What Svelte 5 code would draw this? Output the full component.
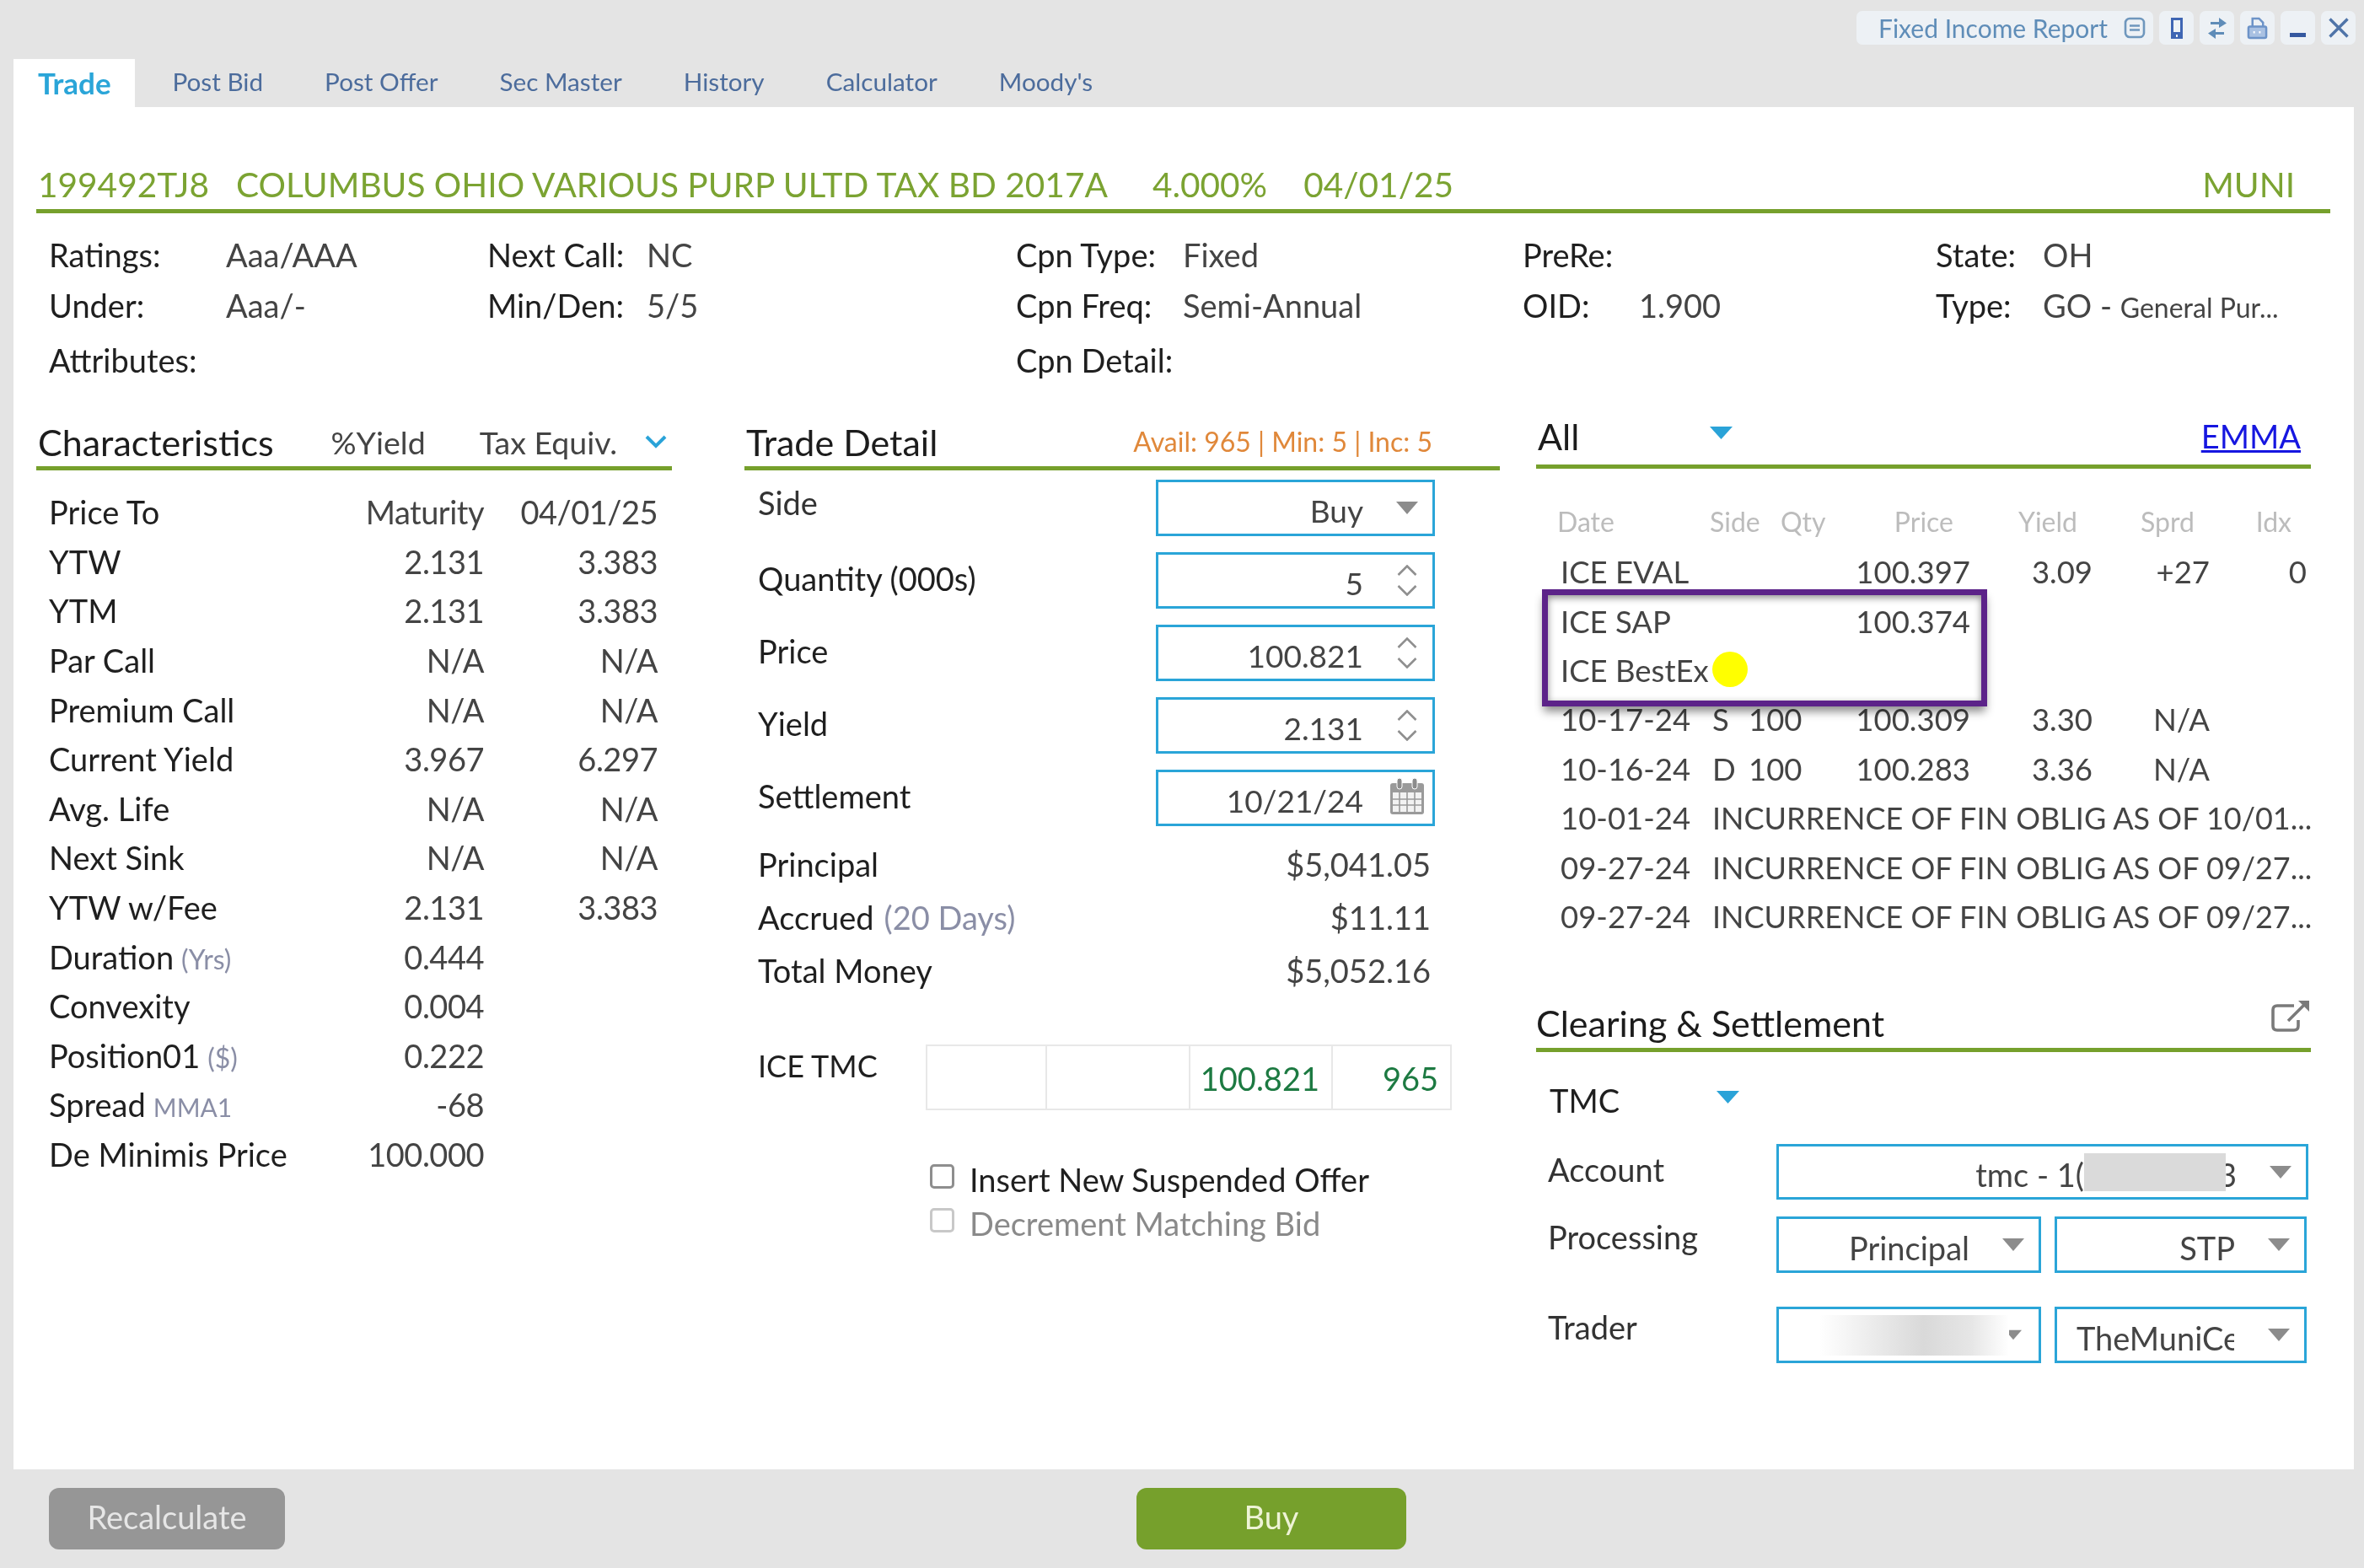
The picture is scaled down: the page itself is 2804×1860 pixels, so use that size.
<script lang="ts">
  const tabs = ['Trade', 'Post Bid', 'Post Offer', 'Sec Master', 'History', 'Calculator', "Moody's"];

  const characteristics = [
    { label: 'Price To', a: 'Maturity', b: '04/01/25' },
    { label: 'YTW', a: '2.131', b: '3.383' },
    { label: 'YTM', a: '2.131', b: '3.383' },
    { label: 'Par Call', a: 'N/A', b: 'N/A' },
    { label: 'Premium Call', a: 'N/A', b: 'N/A' },
    { label: 'Current Yield', a: '3.967', b: '6.297' },
    { label: 'Avg. Life', a: 'N/A', b: 'N/A' },
    { label: 'Next Sink', a: 'N/A', b: 'N/A' },
    { label: 'YTW w/Fee', a: '2.131', b: '3.383' },
    { label: 'Duration', sub: '(Yrs)', a: '0.444', b: '' },
    { label: 'Convexity', a: '0.004', b: '' },
    { label: 'Position01', sub: '($)', a: '0.222', b: '' },
    { label: 'Spread', sub: 'MMA1', a: '-68', b: '' },
    { label: 'De Minimis Price', a: '100.000', b: '' }
  ];

  const history = [
    { date: 'ICE EVAL', price: '100.397', yld: '3.09', sprd: '+27', idx: '0' },
    { date: 'ICE SAP', price: '100.374' },
    { date: 'ICE BestEx', dot: true },
    { date: '10-17-24', side: 'S', qty: '100', price: '100.309', yld: '3.30', sprd: 'N/A' },
    { date: '10-16-24', side: 'D', qty: '100', price: '100.283', yld: '3.36', sprd: 'N/A' },
    { date: '10-01-24', note: 'INCURRENCE OF FIN OBLIG AS OF 10/01...' },
    { date: '09-27-24', note: 'INCURRENCE OF FIN OBLIG AS OF 09/27...' },
    { date: '09-27-24', note: 'INCURRENCE OF FIN OBLIG AS OF 09/27...' }
  ];

  const totals = [
    { label: 'Principal', value: '$5,041.05' },
    { label: 'Accrued', sub: '(20 Days)', value: '$11.11' },
    { label: 'Total Money', value: '$5,052.16' }
  ];

  const steppers = [
    { label: 'Quantity (000s)', value: '5' },
    { label: 'Price', value: '100.821' },
    { label: 'Yield', value: '2.131' }
  ];
</script>

{#snippet caret()}
  <svg class="caret" viewBox="0 0 26 15"><path d="M0 0H26L13 15Z" fill="#8c8c8c" /></svg>
{/snippet}

{#snippet blueCaret()}
  <svg class="blue-caret" viewBox="0 0 27 15"><path d="M0 0H27L13.5 15Z" fill="#2aa3d8" /></svg>
{/snippet}

{#snippet stepper()}
  <svg class="stepper" viewBox="0 0 24 37" fill="none" stroke="#8f8f8f" stroke-width="2.6">
    <path d="M1.5 12L12 1.5L22.500 12" />
    <path d="M1.5 25L12 35.5L22.500 25" />
  </svg>
{/snippet}

<div class="page">
  <div class="topbar">
    <div class="report">
      <span>Fixed Income Report</span>
      <svg viewBox="0 0 26 26" class="ticon doc" fill="none" stroke="#6f97bd" stroke-width="2.6">
        <rect x="2" y="2" width="22" height="22" rx="5" />
        <path d="M7 10.500H19M7 15.500H19" />
      </svg>
    </div>
    <div class="tbtn">
      <svg viewBox="0 0 14 25" class="ticon phone"><path d="M0 0H14V25H0Z" fill="#3f66b4" /><path d="M3 3H11V17H3Z" fill="#eef2f6" /><rect x="6" y="20" width="2" height="3" fill="#eef2f6" /></svg>
    </div>
    <div class="tbtn">
      <svg viewBox="0 0 22 25" class="ticon swap" fill="#5f8cb8">
        <path d="M13 0L22 6.500L13 12V8H3V5H13Z" /><path d="M9 13V17H19V20H9V25L0 18.500Z" />
      </svg>
    </div>
    <div class="tbtn">
      <svg viewBox="0 0 26 28" class="ticon print" fill="none" stroke="#6c93c8" stroke-width="2.6">
        <path d="M7 12V2H15L20 7V12" />
        <rect x="2" y="12" width="22" height="14" rx="2" fill="#a9c1e2" />
        <path d="M8 19H10M15 19H17" stroke="#fff" />
      </svg>
    </div>
    <div class="tbtn">
      <svg viewBox="0 0 19 26" class="ticon minus"><rect x="0" y="19" width="19" height="5" fill="#35589f" /></svg>
    </div>
    <div class="tbtn">
      <svg viewBox="0 0 24 24" class="ticon cross" fill="none" stroke="#4f74a8" stroke-width="3.400"><path d="M1.500 1.500L22.500 22.500M22.500 1.500L1.500 22.500" /></svg>
    </div>
  </div>

  <div class="tabs">
    {#each tabs as tab, i}
      <div class="tab" class:active={i === 0}>{tab}</div>
    {/each}
  </div>

  <div class="panel">
    <div class="title-row">
      <span class="cusip">199492TJ8</span>
      <span class="name">COLUMBUS OHIO VARIOUS PURP ULTD TAX BD 2017A</span>
      <span class="cpn">4.000%</span>
      <span class="mat">04/01/25</span>
      <span class="kind">MUNI</span>
    </div>

    <div class="info">
      <span>Ratings:</span><span class="val">Aaa/AAA</span>
      <span>Next Call:</span><span class="val">NC</span>
      <span>Cpn Type:</span><span class="val">Fixed</span>
      <span>PreRe:</span><span class="val"></span>
      <span>State:</span><span class="val">OH</span>

      <span>Under:</span><span class="val">Aaa/-</span>
      <span>Min/Den:</span><span class="val">5/5</span>
      <span>Cpn Freq:</span><span class="val">Semi-Annual</span>
      <span>OID:</span><span class="val">1.900</span>
      <span>Type:</span><span class="val">GO - <small>General Pur...</small></span>

      <span>Attributes:</span><span></span><span></span><span></span>
      <span>Cpn Detail:</span>
    </div>

    <div class="columns">
      <section class="col-chars">
        <div class="sec-head">
          <h2>Characteristics</h2>
          <span class="yield-head">%Yield</span>
          <span class="tax-head">Tax Equiv.</span>
          <svg class="chevron" viewBox="0 0 26 16" fill="none" stroke="#2aa3d8" stroke-width="4"><path d="M2 2L13 13L24 2" /></svg>
        </div>
        <div class="chars">
          {#each characteristics as row}
            <div class="char-row">
              <span>{row.label}{#if row.sub}<small class="sub" class:mma={row.sub === 'MMA1'}>{row.sub}</small>{/if}</span>
              <span class="num">{row.a}</span>
              <span class="num">{row.b}</span>
            </div>
          {/each}
        </div>
      </section>

      <section class="col-trade">
        <div class="sec-head">
          <h2>Trade Detail</h2>
          <span class="avail">Avail: 965 | Min: 5 | Inc: 5</span>
        </div>
        <div class="form">
          <div class="form-row">
            <span class="side-label">Side</span>
            <div class="field"><span class="fval">Buy</span><span class="faff">{@render caret()}</span></div>
          </div>
          {#each steppers as s}
            <div class="form-row">
              <span>{s.label}</span>
              <div class="field"><span class="fval">{s.value}</span><span class="faff">{@render stepper()}</span></div>
            </div>
          {/each}
          <div class="form-row settle">
            <span>Settlement</span>
            <div class="field">
              <span class="fval">10/21/24</span>
              <span class="faff">
                <svg class="cal" viewBox="0 0 40 43">
                  <rect x="0" y="6" width="40" height="37" rx="3" fill="#9a9a9a" />
                  <rect x="3" y="17" width="34" height="23" fill="#f2f2f2" />
                  <path d="M3 25H37M3 32H37M11 17V40M20 17V40M29 17V40" stroke="#9a9a9a" stroke-width="1.6" />
                  <rect x="8" y="0" width="6" height="13" rx="3" fill="#8c8c8c" stroke="#fff" />
                  <rect x="26" y="0" width="6" height="13" rx="3" fill="#8c8c8c" stroke="#fff" />
                </svg>
              </span>
            </div>
          </div>
          {#each totals as t}
            <div class="total-row">
              <span>{t.label}{#if t.sub}<span class="days">{t.sub}</span>{/if}</span>
              <span>{t.value}</span>
            </div>
          {/each}
        </div>

        <div class="tmc">
          <span class="tmc-label">ICE TMC</span>
          <div class="tmc-table">
            <span></span>
            <span></span>
            <span>100.821</span>
            <span>965</span>
          </div>
        </div>

        <div class="checks">
          <label class="check"><input type="checkbox" /> Insert New Suspended Offer</label>
          <label class="check off"><input type="checkbox" disabled /> Decrement Matching Bid</label>
        </div>
      </section>

      <section class="col-side">
        <div class="sec-head all-head">
          <h2>All</h2>
          <span class="all-caret">{@render blueCaret()}</span>
          <span class="emma">EMMA</span>
        </div>

        <div class="hist">
          <div class="hist-head">
            <span>Date</span><span>Side</span><span>Qty</span>
            <span class="r">Price</span><span class="r">Yield</span><span class="r">Sprd</span><span class="r">Idx</span>
          </div>
          {#each history as row}
            <div class="hist-row">
              <span>{row.date}{#if row.dot}<i class="dot"></i>{/if}</span>
              {#if row.note}
                <span class="note">{row.note}</span>
              {:else}
                <span>{row.side ?? ''}</span>
                <span>{row.qty ?? ''}</span>
                <span class="r">{row.price ?? ''}</span>
                <span class="r">{row.yld ?? ''}</span>
                <span class="r">{row.sprd ?? ''}</span>
                <span class="r">{row.idx ?? ''}</span>
              {/if}
            </div>
          {/each}
          <div class="highlight"></div>
        </div>

        <div class="sec-head clear-head">
          <h2>Clearing &amp; Settlement</h2>
          <svg class="ext" viewBox="0 0 46 38" fill="none" stroke="#7a7a7a" stroke-width="3.600">
            <path d="M27 7H7Q2 7 2 12V31Q2 36 7 36H27Q32 36 32 31V24" />
            <path d="M20 25L40 5" />
            <path d="M32 1H45V14Z" fill="#7a7a7a" stroke="none" />
          </svg>
        </div>

        <div class="tmc-pick">
          <span>TMC</span>
          <span class="tmc-caret">{@render blueCaret()}</span>
        </div>

        <div class="clearing">
          <span class="acct-label">Account</span>
          <div class="field wide">
            <span class="fval acct"><span>tmc - 1(</span><i class="redact"></i><span>3</span></span>
            <span class="caff">{@render caret()}</span>
          </div>
          <span class="up">Processing</span>
          <div class="pair">
            <div class="field"><span class="fval">Principal</span><span class="caff">{@render caret()}</span></div>
            <div class="field"><span class="fval">STP</span><span class="caff">{@render caret()}</span></div>
          </div>
          <span>Trader</span>
          <div class="pair last">
            <div class="field trader"><i class="blur"></i><span class="caff small">{@render caret()}</span></div>
            <div class="field"><span class="fval clip">TheMuniCe</span><span class="caff">{@render caret()}</span></div>
          </div>
        </div>
      </section>
    </div>
  </div>

  <div class="footer">
    <button class="recalc">Recalculate</button>
    <button class="buy">Buy</button>
  </div>
</div>

<style>
  :global(body) {
    margin: 0;
    background: #e4e4e4;
  }

  .page {
    width: 2804px;
    height: 1860px;
    display: flex;
    flex-direction: column;
    background: #e4e4e4;
    font-family: Lato, 'Open Sans', sans-serif;
    font-size: 38px;
    color: #222;
    overflow: hidden;
    filter: blur(0.5px);
  }

  .topbar {
    height: 70px;
    box-sizing: border-box;
    padding: 13px 10px 0 0;
    display: flex;
    justify-content: flex-end;
    gap: 7px;
  }

  .report,
  .tbtn {
    height: 40px;
    background: #edf1f5;
    border-radius: 7px;
    display: flex;
    align-items: center;
    justify-content: center;
  }

  .report {
    width: 352px;
    box-sizing: border-box;
    padding-left: 26px;
    justify-content: flex-start;
    gap: 19px;
    font-size: 30px;
    color: #5f8db8;
    white-space: nowrap;
  }

  .tbtn {
    width: 41px;
  }

  .ticon {
    display: block;
    flex-shrink: 0;
  }

  .doc {
    width: 26px;
    height: 26px;
  }

  .phone {
    width: 14px;
    height: 25px;
  }

  .swap {
    width: 22px;
    height: 25px;
  }

  .print {
    width: 25px;
    height: 27px;
  }

  .minus {
    width: 19px;
    height: 26px;
  }

  .cross {
    width: 24px;
    height: 24px;
  }

  .tabs {
    height: 57px;
    display: flex;
    margin-left: 16px;
    font-size: 29.7px;
    color: #4c6c9c;
  }

  .tab {
    padding: 9px 36.5px 0;
    white-space: nowrap;
  }

  .tab.active {
    width: 144px;
    box-sizing: border-box;
    padding: 7px 0 0 29px;
    margin-right: 8px;
    background: #fff;
    color: #2aa5d8;
    font-size: 35px;
    font-weight: 700;
  }

  .panel {
    flex: 0 0 1616px;
    margin: 0 12px 0 16px;
    padding-left: 27px;
    background: #fff;
    box-sizing: border-box;
  }

  .title-row {
    height: 126px;
    box-sizing: border-box;
    margin-right: 28px;
    padding: 0 42px 0 2px;
    display: flex;
    align-items: flex-end;
    border-bottom: 5px solid #76a02c;
    font-size: 40.6px;
    line-height: 58px;
    color: #7ba332;
  }

  .name {
    margin-left: 32px;
  }

  .cpn {
    margin-left: 53px;
  }

  .mat {
    margin-left: 43px;
  }

  .kind {
    margin-left: auto;
  }

  .info {
    display: grid;
    grid-template-columns: 210px 310px 189px 438px 198px 403px 138px 352px 127px 1fr;
    grid-template-rows: 60px 59px 72px;
    align-items: center;
    margin: 19px 0 2px 15px;
    color: #1f1f1f;
  }

  .info .val {
    color: #444;
  }

  .info small {
    font-size: 32px;
  }

  .columns {
    display: flex;
  }

  .sec-head {
    height: 93px;
    box-sizing: border-box;
    display: flex;
    align-items: center;
    padding: 30px 0 0 2px;
    border-bottom: 5px solid #76a02c;
  }

  h2 {
    margin: 0;
    font-size: 43px;
    font-weight: 400;
    color: #1c1c1c;
    white-space: nowrap;
  }

  .col-chars {
    width: 754px;
  }

  .yield-head,
  .tax-head {
    font-size: 37.5px;
    color: #444;
    white-space: nowrap;
  }

  .yield-head {
    margin-left: 68px;
  }

  .tax-head {
    margin-left: 64px;
  }

  .chevron {
    width: 26px;
    height: 16px;
    margin-left: 33px;
  }

  .chars {
    padding: 20px 0 0 15px;
  }

  .char-row {
    height: 58.6px;
    display: grid;
    grid-template-columns: 300px 216px 206px;
    align-items: center;
    white-space: nowrap;
    color: #1f1f1f;
  }

  .num {
    text-align: right;
    color: #444;
    letter-spacing: -0.5px;
  }

  .sub {
    margin-left: 9px;
    font-size: 32px;
    color: #8a8ea6;
  }

  .sub.mma {
    font-size: 30px;
  }

  .col-trade {
    width: 896px;
    margin-left: 86px;
  }

  .avail {
    margin-left: auto;
    margin-right: 80px;
    padding-bottom: 2px;
    font-size: 32px;
    color: #e0883a;
  }

  .form {
    padding: 11px 0 0 16px;
  }

  .form-row {
    height: 86px;
    width: 803px;
    display: flex;
    justify-content: space-between;
    align-items: flex-start;
    color: #1f1f1f;
  }

  .form-row > span {
    line-height: 63px;
  }

  .form-row.settle {
    height: 80px;
  }

  .side-label {
    margin-top: -4px;
    color: #333;
  }

  .field {
    width: 331px;
    height: 67px;
    box-sizing: border-box;
    border: 3px solid #2aa5d8;
    display: flex;
    align-items: center;
    color: #444;
    font-size: 37px;
  }

  .fval {
    flex: 1;
    padding-top: 6px;
    text-align: right;
    white-space: nowrap;
  }

  .faff {
    width: 60px;
    margin-left: 22px;
    display: flex;
    justify-content: center;
  }

  .caret {
    width: 26px;
    height: 15px;
    display: block;
  }

  .stepper {
    width: 24px;
    height: 37px;
    display: block;
  }

  .cal {
    width: 40px;
    height: 43px;
    display: block;
    margin-top: -4px;
  }

  .total-row {
    height: 63px;
    width: 798px;
    display: flex;
    justify-content: space-between;
    align-items: center;
    color: #1f1f1f;
  }

  .total-row > span:last-child {
    color: #444;
  }

  .days {
    margin-left: 12px;
    color: #8a8ea6;
  }

  .tmc {
    margin: 57px 0 0 16px;
    display: flex;
    align-items: flex-start;
  }

  .tmc-label {
    width: 199px;
    font-size: 36px;
    line-height: 50px;
    color: #1f1f1f;
  }

  .tmc-table {
    width: 624px;
    height: 78px;
    box-sizing: border-box;
    display: grid;
    grid-template-columns: 140px 170px 169px 1fr;
    border: 2px solid #e8e8e8;
    color: #1d7a42;
  }

  .tmc-table span {
    border-left: 2px solid #e8e8e8;
    padding: 0 14px 0 0;
    text-align: right;
    line-height: 76px;
  }

  .tmc-table span:first-child {
    border-left: none;
  }

  .checks {
    margin: 56px 0 0 220px;
  }

  .check {
    height: 52px;
    display: flex;
    align-items: center;
    color: #1f1f1f;
    white-space: nowrap;
  }

  .check input {
    appearance: none;
    width: 29px;
    height: 29px;
    margin: -8px 18px 0 0;
    box-sizing: border-box;
    border: 3px solid #8e8e8e;
    border-radius: 5px;
    background: #fff;
  }

  .check.off {
    color: #8a8a8a;
  }

  .check.off input {
    border-color: #c8c8c8;
  }

  .col-side {
    width: 919px;
    margin-left: 43px;
  }

  .all-head {
    height: 91px;
    padding-top: 18px;
  }

  .all-caret {
    margin: -8px 0 0 155px;
  }

  .emma {
    margin: 0 12px 0 auto;
    font-size: 38px;
    color: #1616e0;
    text-decoration: underline;
  }

  .blue-caret {
    width: 27px;
    height: 15px;
    display: block;
  }

  .hist {
    position: relative;
    margin-top: 32px;
    height: 529px;
  }

  .hist-head,
  .hist-row {
    display: grid;
    align-items: center;
    white-space: nowrap;
  }

  .hist-head {
    height: 61px;
    padding-left: 25px;
    grid-template-columns: 181px 84px 65px 140px 147px 139px 115px;
    color: #bcbcbc;
    font-size: 32px;
  }

  .hist-row {
    height: 58.4px;
    padding-left: 29px;
    grid-template-columns: 180px 43px 76px 187px 145px 139px 115px;
    color: #444;
    font-size: 36.5px;
  }

  .r {
    text-align: right;
  }

  .note {
    grid-column: 2 / -1;
    font-size: 36px;
  }

  .dot {
    display: inline-block;
    width: 42px;
    height: 42px;
    margin-left: 4px;
    vertical-align: -6px;
    border-radius: 50%;
    background: #ffff00;
  }

  .highlight {
    position: absolute;
    left: 7px;
    top: 111px;
    width: 528px;
    height: 139px;
    box-sizing: border-box;
    border: 7px solid #5c2389;
    box-shadow:
      0 8px 10px -2px rgba(0, 0, 0, 0.45),
      inset 0 3px 8px rgba(0, 0, 0, 0.45);
    pointer-events: none;
  }

  .clear-head {
    margin-top: 66px;
    height: 65px;
    padding: 0;
    justify-content: space-between;
  }

  .ext {
    width: 46px;
    height: 38px;
    margin: -16px 1px 0 0;
  }

  .tmc-pick {
    height: 60px;
    margin-top: 27px;
    padding-left: 16px;
    display: flex;
    align-items: center;
    color: #1f1f1f;
  }

  .tmc-caret {
    margin: -8px 0 0 115px;
  }

  .clearing {
    margin-top: 22px;
    padding-left: 14px;
    display: grid;
    grid-template-columns: 271px 631px;
    grid-template-rows: 66px 67px 87px;
    row-gap: 20px;
    align-items: center;
    color: #333;
  }

  .clearing .field {
    font-size: 38px;
  }

  .acct-label {
    margin-top: -6px;
  }

  .up {
    margin-top: -20px;
  }

  .field.wide {
    width: 631px;
    height: 66px;
  }

  .caff {
    width: 48px;
    margin: 0 6px 0 28px;
    display: flex;
    justify-content: center;
  }

  .caff.small .caret {
    width: 20px;
  }

  .acct {
    display: flex;
    justify-content: flex-end;
    align-items: center;
  }

  .redact {
    width: 168px;
    height: 45px;
    margin: -6px -9px 0 0;
    position: relative;
    z-index: 1;
    background: #dadada;
  }

  .pair {
    display: flex;
    gap: 16px;
  }

  .pair.last {
    align-self: end;
  }

  .pair .field {
    width: 314px;
  }

  .pair .field + .field {
    width: 299px;
  }

  .trader {
    position: relative;
    justify-content: flex-end;
  }

  .blur {
    position: absolute;
    left: 48px;
    top: 7px;
    width: 225px;
    height: 48px;
    background: linear-gradient(90deg, #fff, #d9d9d9 55%, #e6e6e6 80%, #fff);
  }

  .clip {
    flex: 0 0 187px;
    margin-left: 23px;
    overflow: hidden;
    text-align: left;
  }

  .clip + .caff {
    margin-left: auto;
  }

  .footer {
    flex: 1;
    display: flex;
    align-items: flex-start;
    padding: 22px 0 0 58px;
  }

  button {
    height: 73px;
    border: none;
    border-radius: 12px;
    font-family: inherit;
    font-size: 38px;
    padding: 0 0 5px;
  }

  .recalc {
    width: 280px;
    background: #969696;
    color: #e6e6e6;
  }

  .buy {
    width: 320px;
    margin-left: 1010px;
    background: #76a02c;
    color: #eef3d6;
  }
</style>
